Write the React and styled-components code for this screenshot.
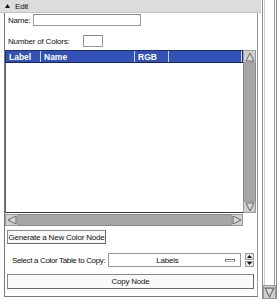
import React from 'react'
import styled, { createGlobalStyle } from 'styled-components'

const Global = createGlobalStyle`
  html, body { margin: 0; padding: 0; background: #fff; }
  body {
    font-family: "Liberation Sans", Arial, sans-serif;
    font-size: 8px;
    letter-spacing: -0.2px;
    color: #111;
    white-space: nowrap;
  }
`

const Screen = styled.div`
  width: 280px;
  height: 307px;
  display: flex;
  background: #fff;
  overflow: hidden;
`

const Main = styled.div`
  width: 261px;
  display: flex;
  flex-direction: column;
`

const Header = styled.div`
  height: 12px;
  background: #dcdcdc;
  border-bottom: 1px solid #c4c4c4;
  display: flex;
  align-items: center;
  gap: 5px;
  padding-left: 5px;
`

const Panel = styled.div`
  margin: 0 3px 0 4px;
  height: 283px;
  border-left: 1px solid #777;
  border-bottom: 1px solid #777;
  border-right: 1px solid #999;
  display: flex;
  flex-direction: column;
`

const Row = styled.div`
  display: flex;
  align-items: center;
  gap: ${p => p.$gap || 2}px;
  padding-left: ${p => p.$indent || 3}px;
  margin-top: ${p => p.$top || 0}px;
  height: ${p => p.$h || 12}px;
`

const Field = styled.div`
  width: ${p => p.$w}px;
  height: ${p => p.$h || 12}px;
  margin-left: ${p => p.$ml || 0}px;
  box-sizing: border-box;
  border: 1px solid #999;
  border-top-color: #888;
  background: #fff;
`

const Table = styled.div`
  margin: 3px 1px 0 0;
  height: 176px;
  display: flex;
`

const TableMain = styled.div`
  flex: 1;
  display: flex;
  flex-direction: column;
`

const HeadRow = styled.div`
  height: 13px;
  box-sizing: border-box;
  background: #3253b5;
  border: 1px solid #1c2f74;
  border-bottom-color: #132262;
  display: flex;
  color: #fff;
  font-weight: bold;
  font-size: 8.5px;
  letter-spacing: 0;
`

const HeadCell = styled.div`
  width: ${p => p.$w ? p.$w + 'px' : 'auto'};
  flex: ${p => p.$w ? 'none' : 1};
  box-sizing: border-box;
  padding-left: 3px;
  display: flex;
  align-items: center;
  border-right: 1px solid #c9d3f0;
`

const Body = styled.div`
  flex: 1;
  background: #fff;
  border-left: 1px solid #666;
  border-bottom: 1px solid #333;
`

const HScroll = styled.div`
  height: 12px;
  display: flex;
  margin-top: 1px;
`

const Track = styled.div`
  flex: 1;
  background: #a6a6a6;
  border-top: 1px solid #888;
  border-bottom: 1px solid #888;
  ${p => p.$vertical && `
    border: none;
    border-left: 1px solid #888;
    border-right: 1px solid #888;
  `}
`

const ArrowBox = styled.div`
  width: ${p => p.$w || 12}px;
  height: ${p => p.$h || 12}px;
  box-sizing: border-box;
  background: #cfcfcf;
  border: 1px solid #9a9a9a;
  display: flex;
  align-items: center;
  justify-content: center;
`

const Side = styled.div`
  width: 13px;
  display: flex;
  flex-direction: column;
`

const Corner = styled.div`
  height: 13px;
`

const Button = styled.div`
  box-sizing: border-box;
  height: ${p => p.$h || 14}px;
  width: ${p => p.$w ? p.$w + 'px' : 'auto'};
  margin: ${p => p.$m || '0'};
  border: 1px solid #888;
  border-right-color: #666;
  border-bottom-color: #666;
  background: #fafafa;
  display: flex;
  align-items: center;
  justify-content: center;
`

const SelectLabel = styled.span`
  letter-spacing: -0.35px;
`

const Combo = styled.div`
  width: 133px;
  height: 14px;
  box-sizing: border-box;
  border: 1px solid #999;
  background: #fff;
  display: flex;
  align-items: center;
`

const ComboText = styled.div`
  flex: 1;
  text-align: center;
`

const Dash = styled.div`
  width: 10px;
  height: 3px;
  box-sizing: border-box;
  border: 1px solid #777;
  border-bottom-color: #bbb;
  margin-right: 5px;
`

const Spinner = styled.div`
  width: 9px;
  height: 14px;
  display: flex;
  flex-direction: column;
  gap: 1px;
  margin-left: 1px;
`

const SpinBtn = styled.div`
  flex: 1;
  background: #e6e6e6;
  border: 1px solid #999;
  display: flex;
  align-items: center;
  justify-content: center;
`

const OuterScroll = styled.div`
  width: 15px;
  height: 299px;
  margin-left: 1px;
  display: flex;
  flex-direction: column;
  box-sizing: border-box;
  border-left: 1px solid #8a8a8a;
  border-right: 1px solid #8a8a8a;
`

const OuterTrack = styled.div`
  flex: 1;
  margin: 0 1px;
  border-left: 1px solid #cfcfcf;
  border-right: 1px solid #9a9a9a;
  background: #fff;
`

const Tri = ({ dir, size = 10, fill = '#d9d9d9', stroke = '#666' }) => {
  const pts = {
    up: '1,9 9,9 5,1',
    down: '1,1 9,1 5,9',
    left: '9,1 9,9 1,5',
    right: '1,1 1,9 9,5',
  }[dir]
  return (
    <svg width={size} height={size} viewBox="0 0 10 10">
      <polygon points={pts} fill={fill} stroke={stroke} strokeWidth="1" />
    </svg>
  )
}

const Caret = ({ down }) => (
  <svg width="5" height="3" viewBox="0 0 5 3">
    <polygon points={down ? '0,0 5,0 2.5,3' : '0,3 5,3 2.5,0'} fill="#111" />
  </svg>
)

export default function App() {
  return (
    <Screen>
      <Global />
      <Main>
        <Header>
          <svg width="5" height="4" viewBox="0 0 5 4"><polygon points="0,4 5,4 2.5,0" fill="#111" /></svg>
          <span>Edit</span>
        </Header>
        <Panel>
          <Row $top={1}>
            <span>Name:</span>
            <Field $w={108} />
          </Row>
          <Row $top={9}>
            <span>Number of Colors:</span>
            <Field $w={20} $ml={11} />
          </Row>
          <Table>
            <TableMain>
              <HeadRow>
                <HeadCell $w={35}>Label</HeadCell>
                <HeadCell $w={94}>Name</HeadCell>
                <HeadCell $w={34}>RGB</HeadCell>
                <HeadCell />
              </HeadRow>
              <Body />
              <HScroll>
                <ArrowBox $w={13}><Tri dir="left" /></ArrowBox>
                <Track />
                <ArrowBox $w={12}><Tri dir="right" /></ArrowBox>
              </HScroll>
            </TableMain>
            <Side>
              <ArrowBox $w={13} $h={13}><Tri dir="up" /></ArrowBox>
              <Track $vertical />
              <ArrowBox $w={13} $h={12}><Tri dir="down" /></ArrowBox>
              <Corner />
            </Side>
          </Table>
          <Button $w={99} $m="4px 0 0 2px">Generate a New Color Node</Button>
          <Row $top={9} $indent={7} $gap={3} $h={14}>
            <SelectLabel>Select a Color Table to Copy:</SelectLabel>
            <Combo>
              <ComboText>Labels</ComboText>
              <Dash />
            </Combo>
            <Spinner>
              <SpinBtn><Caret /></SpinBtn>
              <SpinBtn><Caret down /></SpinBtn>
            </Spinner>
          </Row>
          <Button $h={15} $m="7px 3px 0 2px">Copy Node</Button>
        </Panel>
      </Main>
      <OuterScroll>
        <OuterTrack />
        <ArrowBox $w={13} $h={14}><Tri dir="down" size={11} /></ArrowBox>
      </OuterScroll>
    </Screen>
  )
}
